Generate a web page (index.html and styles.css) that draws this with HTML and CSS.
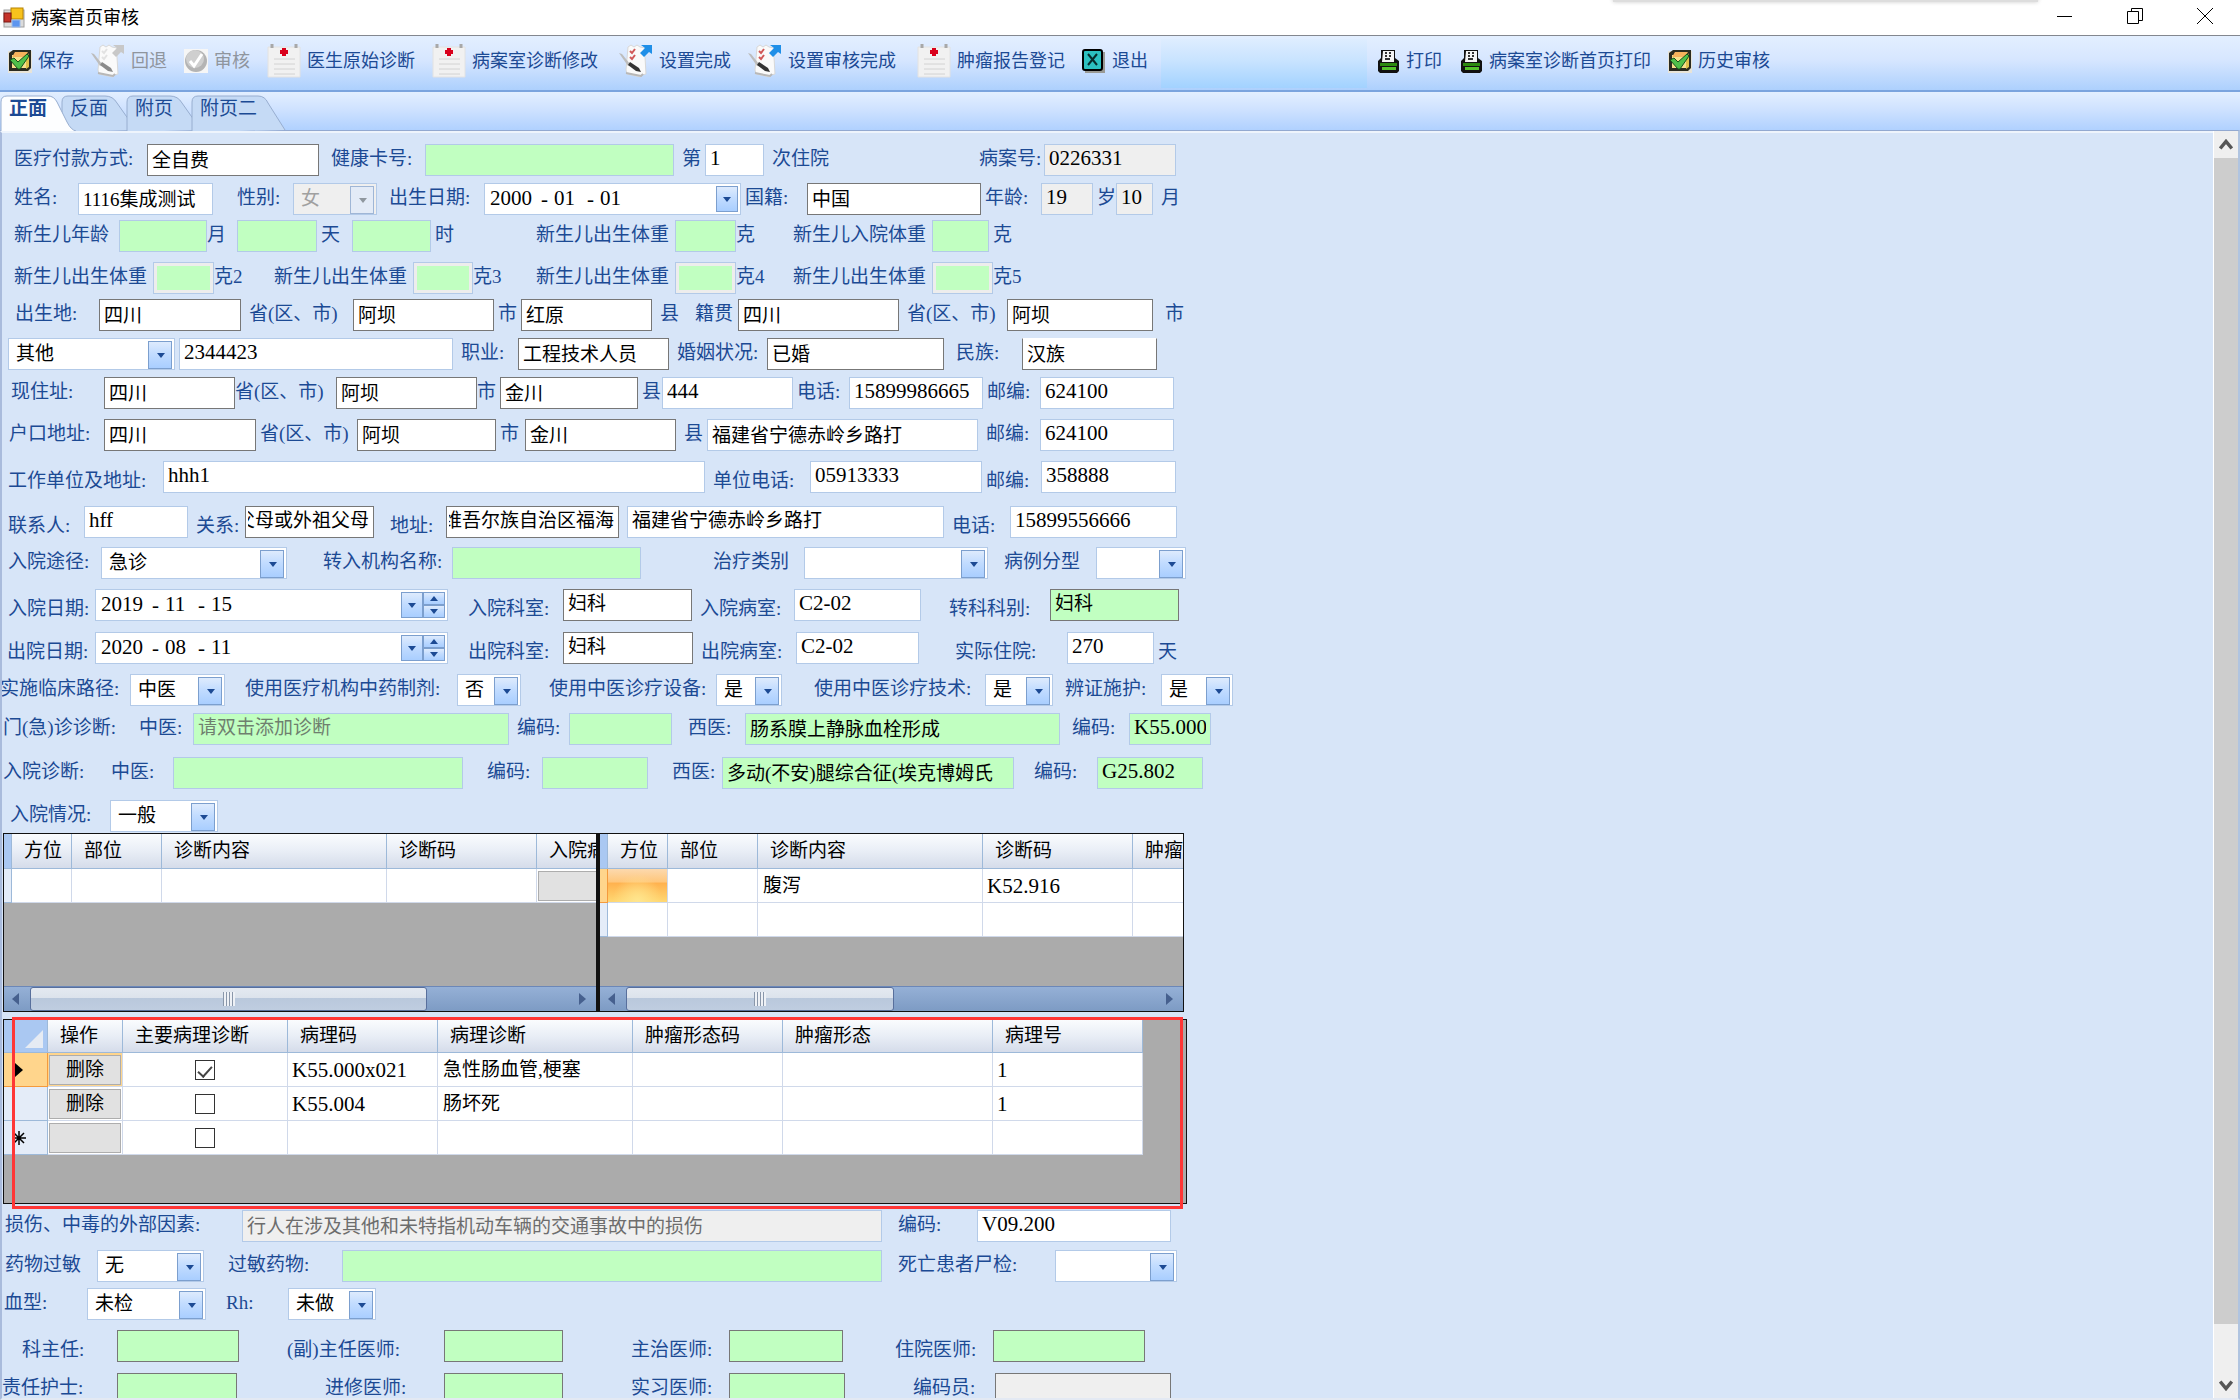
FILE: index.html
```html
<!DOCTYPE html>
<html lang="zh-CN">
<head>
    <meta charset="UTF-8">
    <meta name="viewport" content="width=device-width, initial-scale=1.0">
    <title>病案首页审核</title>
    <link rel="stylesheet" href="styles.css">
</head>
<body>
    <!-- shared icons -->
    <svg class="defs" aria-hidden="true">
        <symbol id="i-save" viewBox="0 0 24 24">
            <rect x="0" y="2" width="24" height="22" fill="#e8e4d8"/>
            <path d="M1 4l4-3h18v18l-3 3H1z" fill="#2b2b20"/>
            <path d="M4 6h15v13H4z" fill="#f7e08a"/>
            <path d="M7 3h13l-3 5H4z" fill="#f6b25c"/>
            <path d="M21 4v14l-3 2v-8z" fill="#e0c04a"/>
            <path d="M2 11l4-2 4 4L19 5l2 2-9 13h-2z" fill="#4fc04a" stroke="#14521a"/>
        </symbol>
        <symbol id="i-note" viewBox="0 0 34 34">
            <path d="M9 3l3-2 3 2 3-2 3 2 5 1v9l1 17-4 1-1 2-14-3-1-4z" fill="#fafafa" stroke="#d8d8d8"/>
            <path d="M7 29l15 3 2-2" fill="none" stroke="#b8b8b8" stroke-width="2"/>
            <path class="tick" d="M11 7l2 2 3-4M11 13l2 2 3-4" fill="none" stroke-width="2"/>
            <path d="M0 9l3 1 8 10-2 2z" fill="#bdbdbd"/>
            <path class="pen" d="M11 18l9 6 2 4-5-1-8-6z"/>
            <path class="arrow" d="M22 1h11v9l-3-2-5 5-4-4 5-5z"/>
        </symbol>
        <symbol id="i-check" viewBox="0 0 24 24">
            <rect width="24" height="24" fill="#f6f6f6"/>
            <circle cx="12" cy="12" r="11" fill="#b4b4b4"/>
            <circle cx="11" cy="10" r="9" fill="#cfcfcf"/>
            <path d="M6 12l4 5 8-12" fill="none" stroke="#fff" stroke-width="3"/>
        </symbol>
        <symbol id="i-sheet" viewBox="0 0 34 34">
            <path d="M1 3h32v30H1z" fill="#f1f1f1" stroke="#e2e2e2"/>
            <path d="M7 15h21M7 20h21M7 25h21M7 30h21" stroke="#d2d2d2"/>
            <path d="M5 0v4M29 0v4" stroke="#a8a8a8" stroke-width="3"/>
            <path d="M17 4v8M13 8h8" stroke="#d9001b" stroke-width="4"/>
        </symbol>
        <symbol id="i-exit" viewBox="0 0 24 24">
            <path d="M3 3h20v21H3z" fill="#9a9a94"/>
            <rect x="1" y="1" width="19" height="20" rx="2" fill="#2cc0c0" stroke="#000" stroke-width="2"/>
            <path d="M6 5l9 11M15 5L6 16" stroke="#062c2c" stroke-width="2"/>
        </symbol>
        <symbol id="i-print" viewBox="0 0 24 24">
            <path d="M2 12l3-3V1h14v8l4 3v10l-2 2H4l-2-2z" fill="#111"/>
            <path d="M7 2h11v11H6z" fill="#f4f4f4"/>
            <path d="M9 4h2M13 4h2M9 7h2M13 7h2M9 10h5" stroke="#333" stroke-width="2"/>
            <path d="M4 14h17v3H4z" fill="#2d8a10"/>
            <path d="M6 18h14v3H6z" fill="#53c22a"/>
        </symbol>
    </svg>

    <header class="titlebar">
        <svg class="app-icon" viewBox="0 0 22 22">
            <rect x="1" y="3" width="20" height="17" fill="#dcdcdc" stroke="#a0a0a0"/>
            <rect x="8" y="1" width="12" height="11" fill="#f7c21c" stroke="#b88300"/>
            <rect x="1" y="6" width="7" height="9" fill="#c4332b" stroke="#7d1712"/>
            <rect x="9" y="13" width="8" height="7" fill="#5c95ef" stroke="#9dbbe8"/>
        </svg>
        <h1>病案首页审核</h1>
        <div class="win-buttons">
            <button aria-label="最小化"><svg viewBox="0 0 16 16"><path d="M0 8.500h15"/></svg></button>
            <button aria-label="还原"><svg viewBox="0 0 16 16"><path d="M.5 3.500h11v12H.5zM4.500 3.500v-3h11v12h-4"/></svg></button>
            <button aria-label="关闭"><svg viewBox="0 0 16 16"><path d="M0 0l16 16M16 0L0 16"/></svg></button>
        </div>
        <div class="top-shade"></div>
    </header>

    <nav class="toolbar">
        <button><svg class="ico"><use href="#i-save"/></svg>保存</button>
        <button disabled><svg class="ico big"><use href="#i-note"/></svg>回退</button>
        <button disabled><svg class="ico"><use href="#i-check"/></svg>审核</button>
        <button><svg class="ico big"><use href="#i-sheet"/></svg>医生原始诊断</button>
        <button><svg class="ico big"><use href="#i-sheet"/></svg>病案室诊断修改</button>
        <button class="set"><svg class="ico big"><use href="#i-note"/></svg>设置完成</button>
        <button><svg class="ico big"><use href="#i-note"/></svg>设置审核完成</button>
        <button class="set"><svg class="ico big"><use href="#i-sheet"/></svg>肿瘤报告登记</button>
        <button><svg class="ico"><use href="#i-exit"/></svg>退出</button>
        <span class="panel"></span>
        <button><svg class="ico"><use href="#i-print"/></svg>打印</button>
        <button><svg class="ico"><use href="#i-print"/></svg>病案室诊断首页打印</button>
        <button><svg class="ico"><use href="#i-save"/></svg>历史审核</button>
    </nav>

    <div class="tabs" role="tablist">
        <button class="tab active" role="tab"><svg viewBox="0 0 100 36"><path d="M1 37V7q0-6 6-6h41q6 0 9 6l10 20q4 8 9 9"/></svg><span>正面</span></button>
        <button class="tab" role="tab"><svg viewBox="0 0 100 36"><path d="M1 37V7q0-6 6-6h37q8 0 12 7l19 27"/></svg><span>反面</span></button>
        <button class="tab" role="tab"><svg viewBox="0 0 100 36"><path d="M1 37V7q0-6 6-6h37q8 0 12 7l19 27"/></svg><span>附页</span></button>
        <button class="tab" role="tab"><svg viewBox="0 0 100 36"><path d="M1 37V7q0-6 6-6h60q7 0 10 7l17 27"/></svg><span>附页二</span></button>
    </div>

    <main class="main">
        <form class="form">
            <div class="row r-pay">
                <label for="pay">医疗付款方式:</label><input id="pay" class="dark g12" value="全自费">
                <label for="card">健康卡号:</label><input id="card" class="green g8">
                <label for="times">第</label><input id="times" class="num g8" value="1">
                <span>次住院</span>
                <label for="caseno">病案号:</label><input id="caseno" class="num gray" value="0226331" readonly>
            </div>
            <div class="row r-name">
                <label for="name">姓名:</label><input id="name" class="g24" value="1116集成测试">
                <label for="sex">性别:</label><span class="combo off g12"><select id="sex" disabled><option>女</option></select></span>
                <label for="by">出生日期:</label>
                <span class="date g4"><input id="by" class="y" value="2000">-<input aria-label="月" value="01">-<input aria-label="日" value="01"><button type="button" class="drop" aria-label="选择日期"></button></span>
                <label for="nation">国籍:</label><input id="nation" class="dark g4" value="中国">
                <label for="agey">年龄:</label><input id="agey" class="num gray g4" value="19" readonly>
                <label for="agem">岁</label><input id="agem" class="num gray g8" value="10" readonly>
                <span>月</span>
            </div>
            <div class="row r-baby">
                <label for="bm">新生儿年龄</label><input id="bm" class="green">
                <label for="bd">月</label><input id="bd" class="green g4">
                <label for="bh">天</label><input id="bh" class="green g4">
                <span>时</span>
                <label for="bw1">新生儿出生体重</label><input id="bw1" class="green">
                <span>克</span>
                <label for="bin">新生儿入院体重</label><input id="bin" class="green g4">
                <span>克</span>
            </div>
            <div class="row r-weight">
                <label for="bw2">新生儿出生体重</label><input id="bw2" class="green inset"><span>克2</span>
                <label for="bw3">新生儿出生体重</label><input id="bw3" class="green inset"><span>克3</span>
                <label for="bw4">新生儿出生体重</label><input id="bw4" class="green inset"><span>克4</span>
                <label for="bw5">新生儿出生体重</label><input id="bw5" class="green inset"><span>克5</span>
            </div>
            <div class="row r-birth">
                <label for="bp">出生地:</label><input id="bp" class="dark g8" value="四川">
                <label for="bc">省(区、市)</label><input id="bc" class="dark g4" value="阿坝">
                <label for="bx">市</label><input id="bx" class="dark g8" value="红原">
                <span>县</span>
                <label for="np">籍贯</label><input id="np" class="dark g8" value="四川">
                <label for="nc">省(区、市)</label><input id="nc" class="dark g12" value="阿坝">
                <span>市</span>
            </div>
            <div class="row r-job">
                <span class="combo g4"><select aria-label="证件类别"><option>其他</option></select></span><input aria-label="证件号" class="num g8" value="2344423">
                <label for="job">职业:</label><input id="job" class="dark g8" value="工程技术人员">
                <label for="marry">婚姻状况:</label><input id="marry" class="dark g12" value="已婚">
                <label for="folk">民族:</label><input id="folk" class="dark open" value="汉族">
            </div>
            <div class="row r-live">
                <label for="lp">现住址:</label><input id="lp" class="dark" value="四川">
                <label for="lc">省(区、市)</label><input id="lc" class="dark" value="阿坝">
                <label for="lx">市</label><input id="lx" class="dark g4" value="金川">
                <label for="la">县</label><input id="la" class="num g4" value="444">
                <label for="lt">电话:</label><input id="lt" class="num g4" value="15899986665">
                <label for="lz">邮编:</label><input id="lz" class="num" value="624100">
            </div>
            <div class="row r-home">
                <label for="hp">户口地址:</label><input id="hp" class="dark g4" value="四川">
                <label for="hc">省(区、市)</label><input id="hc" class="dark g4" value="阿坝">
                <label for="hx">市</label><input id="hx" class="dark g8" value="金川">
                <label for="ha">县</label><input id="ha" class="g8" value="福建省宁德赤岭乡路打">
                <label for="hz">邮编:</label><input id="hz" class="num" value="624100">
            </div>
            <div class="row low r-work">
                <label for="work">工作单位及地址:</label><input id="work" class="num g8" value="hhh1">
                <label for="wt">单位电话:</label><input id="wt" class="num g4" value="05913333">
                <label for="wz">邮编:</label><input id="wz" class="num" value="358888">
            </div>
            <div class="row low r-contact">
                <label for="cn">联系人:</label><input id="cn" class="num g8" value="hff">
                <label for="cr">关系:</label><input id="cr" class="dark tail g16" value="祖父母或外祖父母">
                <label for="ca">地址:</label><input id="ca" class="dark tail g8" value="新疆维吾尔族自治区福海"><input aria-label="详细地址" class="g8" value="福建省宁德赤岭乡路打">
                <label for="ct">电话:</label><input id="ct" class="num" value="15899556666">
            </div>
            <div class="row r-way">
                <label for="way">入院途径:</label><span class="combo g36"><select id="way"><option>急诊</option></select></span>
                <label for="org">转入机构名称:</label><input id="org" class="green g72">
                <label for="cure">治疗类别</label><span class="combo g16"><select id="cure"><option></option></select></span>
                <label for="ctype">病例分型</label><span class="combo"><select id="ctype"><option></option></select></span>
            </div>
            <div class="row low r-in">
                <label for="iy">入院日期:</label>
                <span class="date g20"><input id="iy" class="y" value="2019">-<input aria-label="月" value="11">-<input aria-label="日" value="15"><button type="button" class="drop" aria-label="选择日期"></button><span class="spin"><button type="button" class="up" aria-label="加"></button><button type="button" aria-label="减"></button></span></span>
                <label for="idept">入院科室:</label><input id="idept" class="dark g8" value="妇科">
                <label for="iroom">入院病室:</label><input id="iroom" class="num g28" value="C2-02">
                <label for="trans">转科科别:</label><input id="trans" class="dark green" value="妇科">
            </div>
            <div class="row low r-out">
                <label for="oy">出院日期:</label>
                <span class="date g20"><input id="oy" class="y" value="2020">-<input aria-label="月" value="08">-<input aria-label="日" value="11"><button type="button" class="drop" aria-label="选择日期"></button><span class="spin"><button type="button" class="up" aria-label="加"></button><button type="button" aria-label="减"></button></span></span>
                <label for="odept">出院科室:</label><input id="odept" class="dark g8" value="妇科">
                <label for="oroom">出院病室:</label><input id="oroom" class="num g36" value="C2-02">
                <label for="days">实际住院:</label><input id="days" class="num g4" value="270">
                <span>天</span>
            </div>
            <div class="row r-path">
                <label for="p1">实施临床路径:</label><span class="combo g20"><select id="p1"><option>中医</option></select></span>
                <label for="p2">使用医疗机构中药制剂:</label><span class="combo g28"><select id="p2"><option>否</option></select></span>
                <label for="p3">使用中医诊疗设备:</label><span class="combo g32"><select id="p3"><option>是</option></select></span>
                <label for="p4">使用中医诊疗技术:</label><span class="combo g12"><select id="p4"><option>是</option></select></span>
                <label for="p5">辨证施护:</label><span class="combo"><select id="p5"><option>是</option></select></span>
            </div>
            <div class="row r-clinic">
                <span>门(急)诊诊断:</span>
                <label for="d1">中医:</label><input id="d1" class="green g8" placeholder="请双击添加诊断">
                <label for="d2">编码:</label><input id="d2" class="green g16">
                <label for="d3">西医:</label><input id="d3" class="green g12" value="肠系膜上静脉血栓形成">
                <label for="d4">编码:</label><input id="d4" class="num green" value="K55.000">
            </div>
            <div class="row r-admit">
                <span>入院诊断:</span>
                <label for="e1">中医:</label><input id="e1" class="green g24">
                <label for="e2">编码:</label><input id="e2" class="green g24">
                <label for="e3">西医:</label><input id="e3" class="green g20" value="多动(不安)腿综合征(埃克博姆氏">
                <label for="e4">编码:</label><input id="e4" class="num green" value="G25.802">
            </div>
            <div class="row r-state">
                <label for="state">入院情况:</label><span class="combo"><select id="state"><option>一般</option></select></span>
            </div>

            <div class="pair">
                <section class="grid">
                    <table>
                        <colgroup><col class="c-head"><col class="c-side"><col class="c-part"><col class="c-text"><col class="c-code"><col class="c-code"></colgroup>
                        <tr><th class="corner"></th><th>方位</th><th>部位</th><th>诊断内容</th><th>诊断码</th><th>入院病情</th></tr>
                        <tr><td class="rh"></td><td></td><td></td><td></td><td></td><td class="btn-cell"><button type="button" aria-label="入院病情"></button></td></tr>
                    </table>
                    <div class="hscroll"><i class="tri left"></i><span class="thumb t-left"><i></i></span><i class="tri right"></i></div>
                </section>
                <section class="grid">
                    <table>
                        <colgroup><col class="c-head"><col class="c-side"><col class="c-part"><col class="c-text"><col class="c-code"><col class="c-code"></colgroup>
                        <tr><th class="corner"></th><th>方位</th><th>部位</th><th>诊断内容</th><th>诊断码</th><th>肿瘤形态码</th></tr>
                        <tr><td class="rh hot"></td><td class="picked"></td><td></td><td>腹泻</td><td class="code">K52.916</td><td></td></tr>
                        <tr><td class="rh"></td><td></td><td></td><td></td><td></td><td></td></tr>
                    </table>
                    <div class="hscroll"><i class="tri left"></i><span class="thumb t-right"><i></i></span><i class="tri right"></i></div>
                </section>
            </div>

            <div class="pathology">
                <section class="grid">
                    <table>
                        <colgroup><col class="c-row"><col class="c-op"><col class="c-main"><col class="c-code"><col class="c-diag"><col class="c-code"><col class="c-form"><col class="c-code"></colgroup>
                        <tr><th class="corner all"><svg viewBox="0 0 18 18"><path d="M18 0v18H0z" fill="#e6ebf3"/></svg></th><th>操作</th><th>主要病理诊断</th><th>病理码</th><th>病理诊断</th><th>肿瘤形态码</th><th>肿瘤形态</th><th>病理号</th></tr>
                        <tr><td class="rh hot"><svg viewBox="0 0 8 14"><path d="M0 0l8 7-8 7z"/></svg></td><td class="btn-cell on"><button type="button">删除</button></td><td class="mid"><input type="checkbox" aria-label="主要病理诊断" checked></td><td class="code">K55.000x021</td><td>急性肠血管,梗塞</td><td></td><td></td><td class="code">1</td></tr>
                        <tr><td class="rh"></td><td class="btn-cell"><button type="button">删除</button></td><td class="mid"><input type="checkbox" aria-label="主要病理诊断"></td><td class="code">K55.004</td><td>肠坏死</td><td></td><td></td><td class="code">1</td></tr>
                        <tr><td class="rh"><svg viewBox="0 0 14 14"><path d="M7 0v14M0 7h14M2 2l10 10M12 2L2 12" stroke="#000" stroke-width="1.500"/></svg></td><td class="btn-cell"><button type="button" aria-label="新行"></button></td><td class="mid"><input type="checkbox" aria-label="主要病理诊断"></td><td></td><td></td><td></td><td></td><td></td></tr>
                    </table>
                </section>
                <div class="mark"></div>
            </div>

            <div class="row r-hurt">
                <label for="hurt">损伤、中毒的外部因素:</label><input id="hurt" class="gray g16" value="行人在涉及其他和未特指机动车辆的交通事故中的损伤" disabled>
                <label for="hcode">编码:</label><input id="hcode" class="num" value="V09.200">
            </div>
            <div class="row r-drug">
                <label for="allergy">药物过敏</label><span class="combo g24"><select id="allergy"><option>无</option></select></span>
                <label for="drug">过敏药物:</label><input id="drug" class="green g16">
                <label for="autopsy">死亡患者尸检:</label><span class="combo"><select id="autopsy"><option></option></select></span>
            </div>
            <div class="row r-blood">
                <label for="blood">血型:</label><span class="combo g20"><select id="blood"><option>未检</option></select></span>
                <label for="rh">Rh:</label><span class="combo"><select id="rh"><option>未做</option></select></span>
            </div>
            <div class="row low r-doc">
                <label for="s1">科主任:</label><input id="s1" class="dark green g48">
                <label for="s2">(副)主任医师:</label><input id="s2" class="dark green g68">
                <label for="s3">主治医师:</label><input id="s3" class="dark green g52">
                <label for="s4">住院医师:</label><input id="s4" class="dark green">
            </div>
            <div class="row r-nurse">
                <label for="s5">责任护士:</label><input id="s5" class="dark green g88">
                <label for="s6">进修医师:</label><input id="s6" class="dark green g68">
                <label for="s7">实习医师:</label><input id="s7" class="dark green g68">
                <label for="s8">编码员:</label><input id="s8" class="dark gray" readonly>
            </div>
        </form>
        <div class="vscroll">
            <svg viewBox="0 0 12 10"><path d="M1 8l5-6 5 6"/></svg>
            <span></span>
            <svg viewBox="0 0 12 10"><path d="M1 2l5 6 5-6"/></svg>
        </div>
    </main>
</body>
</html>
```
FILE: styles.css
```css
* {
    box-sizing: border-box;
}
body {
    display: flex;
    flex-direction: column;
    height: 100vh;
    margin: 0;
    overflow: hidden;
    font-family: "Liberation Serif", "Noto Sans CJK SC", serif;
    font-size: 19px;
    color: #1c4a94;
    background: #fff;
}
button, input, select {
    font: inherit;
    color: inherit;
    margin: 0;
}
button {
    padding: 0;
    border: none;
    background: none;
}
.defs {
    position: absolute;
    width: 0;
    height: 0;
}

/* title bar */
.titlebar {
    display: flex;
    align-items: center;
    flex: none;
    height: 35px;
    padding-left: 3px;
    position: relative;
    color: #000;
}
.app-icon {
    width: 22px;
    height: 22px;
}
.titlebar h1 {
    flex: 1;
    margin: 0 0 0 6px;
    padding-top: 2px;
    font-size: 18px;
    font-weight: normal;
    line-height: 33px;
}
.win-buttons {
    display: flex;
}
.win-buttons button {
    width: 70px;
    height: 34px;
}
.win-buttons svg {
    width: 16px;
    height: 16px;
    fill: none;
    stroke: #000;
}
.top-shade {
    position: absolute;
    top: -6px;
    left: 72%;
    width: 19%;
    height: 8px;
    background: #ddd;
    box-shadow: 0 0 4px #ccc;
}

/* toolbar */
.toolbar {
    --tick: #d05858;
    --pen: #333;
    --arrow: #1f8fe8;
    display: flex;
    align-items: center;
    flex: none;
    gap: 17px;
    height: 57px;
    padding: 0 0 4px 8px;
    border-top: 1px solid #83878f;
    border-bottom: 2px solid #7ba4de;
    background: linear-gradient(#e3efff, #d6e6ff 45%, #add0fd);
}
.toolbar button {
    display: flex;
    align-items: center;
    gap: 6px;
    height: 40px;
    font-size: 18px;
    line-height: 36px;
    white-space: nowrap;
}
.toolbar button:disabled {
    --tick: #e2e2e2;
    --pen: #8a8a8a;
    --arrow: #c8c8c8;
    color: #8f959e;
}
.toolbar .set {
    margin-left: 4px;
}
.ico {
    width: 24px;
    height: 24px;
}
.ico.big {
    width: 34px;
    height: 34px;
}
.tick {
    stroke: var(--tick);
}
.pen {
    fill: var(--pen);
}
.arrow {
    fill: var(--arrow);
}
.panel {
    align-self: stretch;
    width: 206px;
    margin: 3px -8px -2px -4px;
    background: linear-gradient(#deedff, #c8e3ff 45%, #a2d2ff);
}

/* tabs */
.tabs {
    display: flex;
    flex: none;
    height: 38px;
    padding-top: 3px;
    background: linear-gradient(#e3efff, #cfe2ff 45%, #b0d1ff);
}
.tab {
    position: relative;
    width: 65px;
    height: 36px;
    text-align: left;
}
.tab svg {
    position: absolute;
    top: 0;
    left: 0;
    width: 100px;
    height: 36px;
    fill: #c5daf5;
    stroke: #98aed0;
}
.tab span {
    position: relative;
    display: block;
    padding: 0 0 9px 9px;
    line-height: 26px;
    white-space: nowrap;
}
.tab.active {
    z-index: 1;
    width: 61px;
    font-weight: bold;
}
.tab.active svg {
    fill: #fdfeff;
}

/* form area */
.main {
    display: flex;
    flex: 1;
    min-height: 0;
    border-top: 1px solid #93a9d0;
    border-left: 2px solid #a9bbdc;
    border-right: 2px solid #b0c4e0;
    border-bottom: 2px solid #e3e9f3;
}
.form {
    display: grid;
    grid-template-rows: 39px 37px 42px 37px 39px 39px 42px 42px 45px 41px 42px 43px 42px 39px 44px 43px 33px 186px 191px 40px 38px 42px 43px 32px;
    align-content: start;
    flex: 1;
    overflow: hidden;
    padding-top: 11px;
    margin-left: -2px;
    border-top: 2px solid #eef4fc;
    border-left: 2px solid #a9bbdc;
    background: #d7e5f8;
}
.row, .pair, .pathology {
    margin-left: -2px;
}
.row {
    display: grid;
    align-items: start;
    line-height: 30px;
    white-space: nowrap;
}
.low {
    line-height: 39px;
}

/* column starts of each row */
.r-pay { padding-left: 14px; grid-template-columns: 133px 184px 94px 257px 23px 67px 207px 65px 132px; }
.r-name { padding-left: 14px; grid-template-columns: 64px 159px 56px 96px 95px 261px 62px 178px 56px 56px 19px 45px 30px; }
.r-baby { padding-left: 14px; grid-template-columns: 105px 88px 30px 84px 31px 83px 101px 139px 61px 57px 139px 61px 30px; }
.r-weight { padding-left: 14px; grid-template-columns: 139px 61px 60px 139px 60px 63px 139px 61px 57px 139px 61px 40px; }
.r-birth { padding-left: 15px; grid-template-columns: 84px 150px 104px 145px 23px 139px 35px 43px 169px 100px 158px 30px; }
.r-job { padding-left: 8px; grid-template-columns: 171px 282px 57px 159px 90px 189px 66px 135px; }
.r-live { padding-left: 11px; grid-template-columns: 93px 131px 101px 141px 23px 142px 20px 135px 52px 138px 53px 134px; }
.r-home { padding-left: 9px; grid-template-columns: 95px 156px 97px 143px 25px 159px 23px 279px 54px 134px; }
.r-work { padding-left: 8px; grid-template-columns: 155px 550px 97px 176px 55px 135px; }
.r-contact { padding-left: 8px; grid-template-columns: 76px 112px 49px 145px 56px 181px 325px 58px 167px; }
.r-way { padding-left: 8px; grid-template-columns: 93px 222px 129px 261px 91px 200px 92px 90px; }
.r-in { padding-left: 8px; grid-template-columns: 87px 373px 95px 137px 94px 155px 101px 129px; }
.r-out { padding-left: 7px; grid-template-columns: 88px 373px 95px 138px 95px 159px 112px 91px 30px; }
.r-path { padding-left: 0; grid-template-columns: 130px 115px 212px 92px 167px 98px 171px 80px 96px 72px; }
.r-clinic { padding-left: 3px; grid-template-columns: 136px 54px 324px 52px 119px 57px 327px 57px 82px; }
.r-admit { padding-left: 3px; grid-template-columns: 108px 62px 314px 55px 130px 50px 312px 63px 106px; }
.r-state { padding-left: 10px; grid-template-columns: 100px 108px; }
.r-hurt { padding-left: 5px; grid-template-columns: 237px 656px 79px 194px; }
.r-drug { padding-left: 5px; grid-template-columns: 92px 131px 114px 556px 157px 122px; }
.r-blood { padding-left: 4px; grid-template-columns: 83px 139px 62px 88px; }
.r-doc { padding-left: 22px; grid-template-columns: 95px 170px 157px 187px 98px 166px 98px 152px; }
.r-nurse { padding-left: 2px; grid-template-columns: 115px 208px 119px 187px 98px 184px 82px 176px; }

/* space after a field */
.g4 { margin-right: 4px; }
.g8 { margin-right: 8px; }
.g12 { margin-right: 12px; }
.g16 { margin-right: 16px; }
.g20 { margin-right: 20px; }
.g24 { margin-right: 24px; }
.g28 { margin-right: 28px; }
.g32 { margin-right: 32px; }
.g36 { margin-right: 36px; }
.g48 { margin-right: 48px; }
.g52 { margin-right: 52px; }
.g68 { margin-right: 68px; }
.g72 { margin-right: 72px; }
.g88 { margin-right: 88px; }

/* fields */
.row > input, .combo, .date {
    min-width: 0;
    height: 32px;
    border: 1px solid #b3cae8;
    background: #fff;
    color: #000;
}
.row > input {
    justify-self: stretch;
    padding: 0 4px 3px;
    border-radius: 0;
    outline: none;
}
.row > input.dark {
    border: 1px solid #777;
    padding-bottom: 4px;
}
.row > input.green {
    background: #c1ffc1;
}
.row > input.gray {
    background: #efefef;
}
.row > input:disabled {
    color: #6d6d6d;
    -webkit-text-fill-color: #6d6d6d;
}
.row > input.num {
    font-size: 21px;
}
.row > input.inset {
    box-shadow: inset 0 0 0 3px #ededed;
}
.row > input.open {
    border-top-color: #fff;
}
.row > input.tail {
    direction: rtl;
    padding: 0 4px 3px 2px;
}
.row > input::placeholder {
    color: #6f7f6f;
}
.combo {
    position: relative;
    display: block;
}
.combo select {
    display: block;
    width: 100%;
    height: 27px;
    padding: 0 26px 0 7px;
    appearance: none;
    border: none;
    background: none;
    outline: none;
}
.combo::before, .drop, .spin button {
    border: 1px solid #7c9fce;
    background: linear-gradient(#deebfd, #c2dcff 45%, #a9ceff);
}
.combo::before {
    content: "";
    position: absolute;
    top: 2px;
    right: 2px;
    width: 22px;
    height: 26px;
    pointer-events: none;
}
.combo::after, .drop::after, .spin button::after {
    content: "";
    border: 4px solid transparent;
    border-top: 5px solid #1c4a94;
    border-bottom: none;
}
.combo::after {
    position: absolute;
    top: 14px;
    right: 9px;
    pointer-events: none;
}
.combo.off {
    background: #efefef;
    color: #a0a0a0;
}
.combo.off select {
    color: #a0a0a0;
    opacity: 1;
}
.combo.off::before {
    border-color: #9fb6d6;
    background: #e3ebf7;
}
.combo.off::after {
    border-top-color: #8f979f;
}
.date {
    display: flex;
    align-items: center;
    gap: 6px;
    padding: 0 2px 0 5px;
    font-size: 21px;
    line-height: 24px;
}
.date input {
    width: 27px;
    height: 26px;
    padding: 0 0 2px;
    border: none;
    outline: none;
}
.date .y {
    width: 45px;
}
.drop {
    display: flex;
    align-items: center;
    justify-content: center;
    width: 22px;
    height: 26px;
    margin-left: auto;
}
.spin {
    display: flex;
    flex-direction: column;
    margin-left: -6px;
}
.spin button {
    display: flex;
    align-items: center;
    justify-content: center;
    width: 22px;
    height: 13px;
}
.spin .up::after {
    border-top: none;
    border-bottom: 5px solid #1c4a94;
}

/* data grids */
.pair {
    display: grid;
    grid-template-columns: 594px 587px;
    height: 179px;
    padding-left: 3px;
}
.grid {
    display: flex;
    flex-direction: column;
    justify-content: space-between;
    overflow: hidden;
    border: 1px solid #111;
    background: #ababab;
    color: #000;
}
.pair .grid + .grid {
    border-left-width: 3px;
}
.grid table {
    width: 1px;
    table-layout: fixed;
    border-spacing: 0;
    line-height: 32px;
    white-space: nowrap;
}
.c-head { width: 8px; }
.c-side { width: 60px; }
.c-part { width: 90px; }
.c-text { width: 225px; }
.c-code { width: 150px; }
.c-row { width: 44px; }
.c-op { width: 75px; }
.c-main { width: 165px; }
.c-diag { width: 195px; }
.c-form { width: 210px; }
.grid th {
    height: 35px;
    padding: 0 0 0 12px;
    overflow: hidden;
    border-right: 1px solid #9db9d9;
    border-bottom: 1px solid #9db9d9;
    background: linear-gradient(#fafcfe, #e9eef6 50%, #d5dcea);
    font-weight: normal;
    text-align: left;
}
.grid td {
    height: 34px;
    padding: 0 5px;
    border-right: 1px solid #d0d9ea;
    border-bottom: 1px solid #d0d9ea;
    background: #fff;
}
.grid .corner {
    padding: 0;
    background: #aac8f2;
}
.grid .all {
    padding: 6px 4px 0 0;
    text-align: right;
    line-height: 0;
}
.all svg {
    width: 18px;
    height: 18px;
}
.grid .rh {
    padding: 0;
    border-color: #9db9d9;
    background: #e4ecf8;
    line-height: 0;
}
.rh svg {
    width: 14px;
    height: 14px;
    margin-left: 8px;
}
.grid .hot {
    border-color: #f59a3c;
    background: #ffd58c;
}
.grid .picked {
    background: radial-gradient(ellipse at bottom, #ffe68f, transparent 60%), linear-gradient(#fcd9ae, #ffc67a 40%, #ffb14e 42%, #ffd872);
}
.grid .code {
    padding-left: 4px;
    font-size: 21px;
}
.grid .mid {
    text-align: center;
    line-height: 0;
}
.mid input {
    display: inline-grid;
    place-content: center;
    width: 20px;
    height: 20px;
    appearance: none;
    border: 1px solid #333;
    background: #fff;
}
.mid input:checked::after {
    content: "";
    width: 6px;
    height: 12px;
    border: solid #444;
    border-width: 0 2px 2px 0;
    rotate: 42deg;
}
.grid .btn-cell {
    padding: 1px;
}
.btn-cell button {
    display: block;
    width: 100%;
    height: 30px;
    border: 1px solid #adadad;
    background: #e1e1e1;
    line-height: 26px;
}
.grid .on {
    background: #ffd58c;
}
.hscroll {
    display: flex;
    align-items: stretch;
    height: 25px;
    padding: 0 10px 0 8px;
    border-top: 1px solid #6b87b8;
    background: linear-gradient(#95b0d6, #7d9bc4);
}
.tri {
    align-self: center;
    border: 6px solid transparent;
}
.left {
    border-left: none;
    border-right: 7px solid #46608e;
    margin-right: 11px;
}
.right {
    border-right: none;
    border-left: 7px solid #46608e;
    margin-left: auto;
}
.thumb {
    display: flex;
    align-items: center;
    justify-content: center;
    border: 1px solid #586f9c;
    border-radius: 3px;
    background: linear-gradient(#e4e9f1, #dce3ec 45%, #b9c8dc 46%, #bfcde0);
}
.thumb i {
    width: 12px;
    height: 14px;
    background: repeating-linear-gradient(90deg, #8a97aa 0 1px, #eef1f6 1px 3px);
}
.t-left {
    width: 397px;
}
.t-right {
    width: 268px;
}
.pathology {
    position: relative;
    width: 1187px;
    height: 185px;
    padding-left: 3px;
}
.pathology .grid {
    height: 100%;
}
.pathology .grid th {
    height: 32px;
}
.mark {
    position: absolute;
    top: -2px;
    left: 12px;
    width: 1171px;
    height: 192px;
    border: 3px solid #ff3636;
}

/* vertical scrollbar */
.vscroll {
    display: flex;
    flex-direction: column;
    align-items: center;
    justify-content: space-between;
    width: 25px;
    border-left: 1px solid #fff;
    background: #efefef;
}
.vscroll span {
    width: 100%;
    height: 92%;
    margin-bottom: auto;
    background: #cdcdcd;
}
.vscroll svg {
    width: 14px;
    height: 12px;
    margin: 8px 0 7px;
    fill: none;
    stroke: #555;
    stroke-width: 3;
}
```
